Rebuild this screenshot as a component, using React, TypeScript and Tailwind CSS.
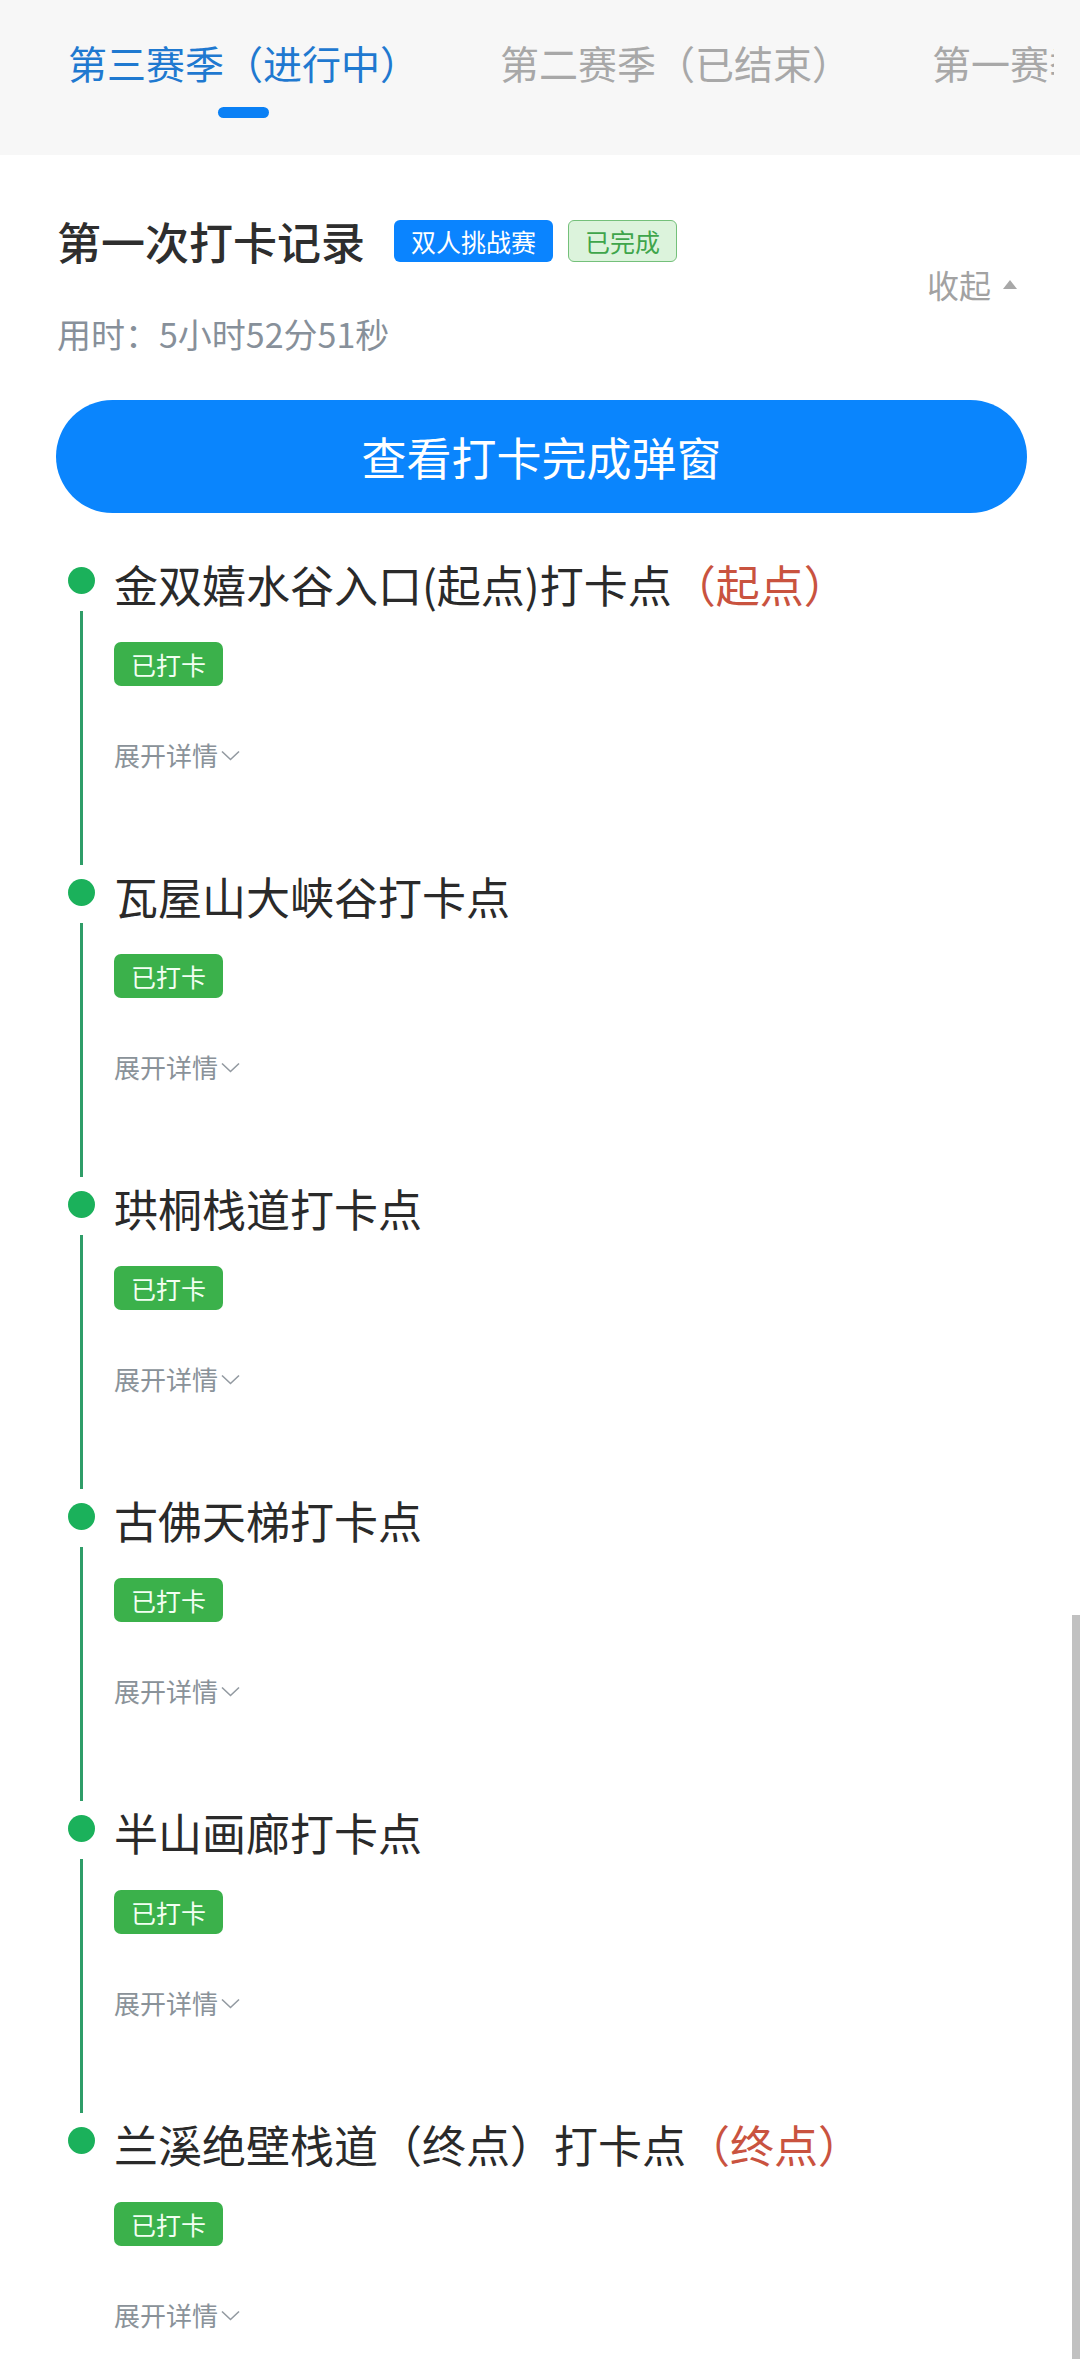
import React from "react";

const spots = [
  { name: "金双嬉水谷入口(起点)打卡点", tag: "（起点）" },
  { name: "瓦屋山大峡谷打卡点" },
  { name: "珙桐栈道打卡点" },
  { name: "古佛天梯打卡点" },
  { name: "半山画廊打卡点" },
  { name: "兰溪绝壁栈道（终点）打卡点", tag: "（终点）" },
];

const tabs = ["第三赛季（进行中）", "第二赛季（已结束）", "第一赛季（已结束）"];

export default function App() {
  return (
    <div className="relative min-h-[2359px] bg-white font-['Noto_Sans_CJK_SC','Noto_Sans',sans-serif] overflow-hidden">
      {/* season tabs */}
      <div className="h-[155px] bg-[#f7f7f7] pt-[34px] pl-[68px] pr-[26px]">
        <div className="flex gap-[81px] overflow-hidden whitespace-nowrap">
          {tabs.map((t, i) => (
            <div key={t} className="flex flex-col items-center shrink-0">
              <span
                className={
                  i === 0
                    ? "text-[39px] leading-[56px] text-[#1f79d0]"
                    : "text-[39px] leading-[56px] text-[#a8a8a8]"
                }
              >
                {t}
              </span>
              <div
                className={
                  i === 0
                    ? "mt-[17px] h-[11px] w-[51px] rounded-full bg-[#0a80f5]"
                    : "mt-[17px] h-[11px] w-[51px]"
                }
              />
            </div>
          ))}
        </div>
      </div>

      {/* record header */}
      <div className="pt-[56px] pl-[57px] pr-[63px] flex items-center justify-between">
        <div>
          <div className="flex items-center h-[60px]">
            <h1 className="text-[44px] leading-[60px] font-medium text-[#2e2e2e]">第一次打卡记录</h1>
            <span className="ml-[29px] h-[42px] px-[17px] rounded-[6px] bg-[#0a84ff] text-white text-[25px] leading-[42px]">
              双人挑战赛
            </span>
            <span className="ml-[15px] h-[42px] px-[16px] rounded-[6px] border border-[#74c07a] bg-[#dcf3dc] text-[#3fa54b] text-[25px] leading-[40px]">
              已完成
            </span>
          </div>
          <p className="mt-[40px] text-[34px] leading-[46px] text-[#87909a]">用时：5小时52分51秒</p>
        </div>
        <div className="flex items-center gap-[12px] text-[32px] leading-[44px] text-[#a2a2a2]">
          <span>收起</span>
          <svg width="14" height="9" viewBox="0 0 14 9">
            <polygon points="7,0 14,9 0,9" fill="#a8a8a8" />
          </svg>
        </div>
      </div>

      <button className="mt-[43px] ml-[56px] mr-[53px] w-[971px] h-[113px] rounded-full bg-[#0a85fd] text-white text-[45px]">
        查看打卡完成弹窗
      </button>

      {/* checkpoint timeline */}
      <div className="mt-[45px]">
        {spots.map((s, i) => {
          const last = i === spots.length - 1;
          return (
            <div key={s.name} className="flex min-h-[312px]">
              <div className="ml-[54px] w-[54px] flex flex-col items-center">
                <div className="mt-[9px] h-[27px] w-[27px] rounded-full bg-[#1bb15b]" />
                {!last && <div className="mt-[17px] mb-[5px] flex-1 w-[3px] bg-[#2f9d68]" />}
              </div>
              <div className="ml-[6px] pb-[98px]">
                <div className="text-[44px] leading-[52px] text-[#2a2a2a] whitespace-nowrap">
                  {s.name}
                  {s.tag && <span className="text-[#c9533f]">{s.tag}</span>}
                </div>
                <div className="mt-[32px] inline-block h-[44px] px-[17px] rounded-[7px] bg-[#3bb14b] text-[#f2fff2] text-[25px] leading-[44px]">
                  已打卡
                </div>
                <div className="mt-[52px] flex items-center text-[26px] leading-[34px] text-[#8a9299]">
                  <span>展开详情</span>
                  <svg className="ml-[3px]" width="19" height="11" viewBox="0 0 19 11">
                    <polyline points="1,1.5 9.5,9.5 18,1.5" fill="none" stroke="#939aa1" strokeWidth="1.6" />
                  </svg>
                </div>
              </div>
            </div>
          );
        })}
      </div>

      {/* scroll indicator */}
      <div className="absolute right-0 top-[1615px] bottom-0 w-[8px] bg-[#c1c1c1]" />
    </div>
  );
}
